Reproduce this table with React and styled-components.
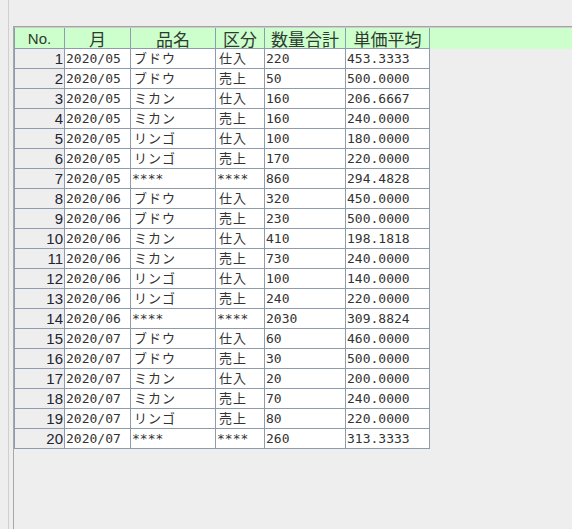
import React from 'react'
import styled, { createGlobalStyle } from 'styled-components'

const Global = createGlobalStyle`
  html, body {
    margin: 0;
    padding: 0;
    background: #eeeeee;
  }
`;

const Frame = styled.div`
  width: 572px;
  height: 529px;
  overflow: hidden;
  background: #eeeeee;
  padding-left: 8px;
  box-sizing: border-box;
`;

const Panel = styled.div`
  height: 100%;
  border-left: 1px solid #cfcfcf;
  padding-left: 4px;
  padding-top: 26px;
  box-sizing: border-box;
`;

const Pane = styled.div`
  height: 100%;
  border-top: 1px solid #a3a3a3;
  border-left: 1px solid #a8a8a8;
  box-sizing: border-box;
`;

const cols = '50px 66px 85px 49px 81px 84px';

const HeaderBar = styled.div`
  background: #ccffcc;
  border-top: 1px solid #cdcdcd;
  height: 22px;
  box-sizing: border-box;
  border-left: 1px solid #8e9cad;
`;

const HeaderRow = styled.div`
  display: grid;
  grid-template-columns: ${cols};
  width: 415px;
  height: 100%;
`;

const HeadCell = styled.div`
  border-right: 1px solid #8e9cad;
  border-bottom: 1px solid #8e9cad;
  box-sizing: border-box;
  display: flex;
  align-items: center;
  justify-content: center;
  padding-top: 2px;
  color: #2f3a30;
  font-family: ${p => (p.$latin ? '"Liberation Sans", Arial, sans-serif' : '"Noto Sans CJK JP", sans-serif')};
  font-size: ${p => (p.$latin ? '15px' : '17px')};
  line-height: 18px;
  white-space: nowrap;
`;

const Body = styled.div`
  display: grid;
  grid-template-columns: ${cols};
  grid-auto-rows: 20px;
  width: 415px;
  border-left: 1px solid #8e9cad;
`;

const NoCell = styled.div`
  background: #eeeeee;
  border-right: 1px solid #8e9cad;
  border-bottom: 1px solid #8e9cad;
  box-sizing: border-box;
  text-align: right;
  padding-right: 1px;
  font-family: "Liberation Sans", Arial, sans-serif;
  font-size: 15px;
  line-height: 19px;
  color: #1e2433;
`;

const Cell = styled.div`
  background: #ffffff;
  border-right: 1px solid #8e9cad;
  border-bottom: 1px solid #8e9cad;
  box-sizing: border-box;
  padding-left: ${p => (p.$jp ? '3px' : '1px')};
  font-family: "DejaVu Sans Mono", "Noto Sans CJK JP", monospace;
  font-size: 13px;
  line-height: 20px;
  color: #333333;
  white-space: nowrap;
  overflow: hidden;
  letter-spacing: ${p => (p.$jp ? '1px' : '0')};
`;

const headers = ['No.', '月', '品名', '区分', '数量合計', '単価平均'];

const rows = [
  ['2020/05', 'ブドウ', '仕入', '220', '453.3333'],
  ['2020/05', 'ブドウ', '売上', '50', '500.0000'],
  ['2020/05', 'ミカン', '仕入', '160', '206.6667'],
  ['2020/05', 'ミカン', '売上', '160', '240.0000'],
  ['2020/05', 'リンゴ', '仕入', '100', '180.0000'],
  ['2020/05', 'リンゴ', '売上', '170', '220.0000'],
  ['2020/05', '****', '****', '860', '294.4828'],
  ['2020/06', 'ブドウ', '仕入', '320', '450.0000'],
  ['2020/06', 'ブドウ', '売上', '230', '500.0000'],
  ['2020/06', 'ミカン', '仕入', '410', '198.1818'],
  ['2020/06', 'ミカン', '売上', '730', '240.0000'],
  ['2020/06', 'リンゴ', '仕入', '100', '140.0000'],
  ['2020/06', 'リンゴ', '売上', '240', '220.0000'],
  ['2020/06', '****', '****', '2030', '309.8824'],
  ['2020/07', 'ブドウ', '仕入', '60', '460.0000'],
  ['2020/07', 'ブドウ', '売上', '30', '500.0000'],
  ['2020/07', 'ミカン', '仕入', '20', '200.0000'],
  ['2020/07', 'ミカン', '売上', '70', '240.0000'],
  ['2020/07', 'リンゴ', '売上', '80', '220.0000'],
  ['2020/07', '****', '****', '260', '313.3333'],
];

const isJp = s => /[^\x00-\x7f]/.test(s);

export default function App() {
  return (
    <Frame>
      <Global />
      <Panel>
        <Pane>
          <HeaderBar>
            <HeaderRow>
              {headers.map((h, i) => (
                <HeadCell key={h} $latin={i === 0}>{h}</HeadCell>
              ))}
            </HeaderRow>
          </HeaderBar>
          <Body>
            {rows.map((r, i) => (
              <React.Fragment key={i}>
                <NoCell>{i + 1}</NoCell>
                {r.map((v, j) => (
                  <Cell key={j} $jp={isJp(v)}>{v}</Cell>
                ))}
              </React.Fragment>
            ))}
          </Body>
        </Pane>
      </Panel>
    </Frame>
  )
}
